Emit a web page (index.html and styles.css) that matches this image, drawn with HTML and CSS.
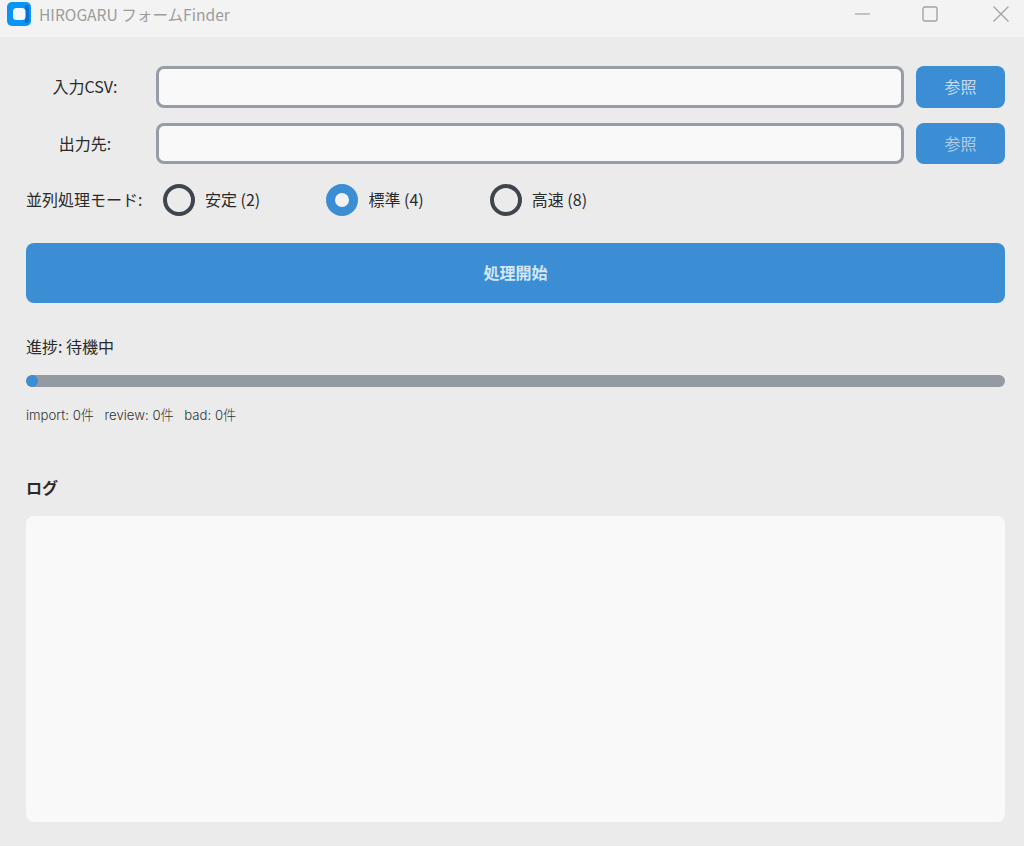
FILE: index.html
```html
<!DOCTYPE html>
<html lang="ja">
<head>
<meta charset="utf-8">
<title>HIROGARU フォームFinder</title>
<link rel="stylesheet" href="styles.css">
</head>
<body>
<header class="titlebar">
  <svg class="logo" width="24" height="24" viewBox="0 0 24 24">
    <rect width="24" height="24" rx="5" fill="#0a94f5"/>
    <path d="M18 3h1a3 3 0 0 1 3 3v12a3 3 0 0 1-3 3h-1z" fill="#0c6fd0"/>
    <rect x="6" y="6" width="12.500" height="12" rx="3.500" fill="#f4f8fc"/>
  </svg>
  <span class="app-title">HIROGARU フォームFinder</span>
  <div class="win-controls">
    <svg width="16" height="16" viewBox="0 0 16 16"><path d="M0 8h15" stroke="#a3a3a3" stroke-width="1.2" fill="none"/></svg>
    <svg class="win-max" width="16" height="16" viewBox="0 0 16 16"><rect x="1" y="1" width="14" height="14" rx="2" stroke="#a3a3a3" stroke-width="1.4" fill="none"/></svg>
    <svg class="win-close" width="16" height="16" viewBox="0 0 16 16"><path d="M.5.5l15 15M15.500.5l-15 15" stroke="#a3a3a3" stroke-width="1.3" fill="none"/></svg>
  </div>
</header>
<main class="content">
  <div class="field-row">
    <label class="field-label">入力CSV:</label>
    <div class="text-input"></div>
    <button class="browse">参照</button>
  </div>
  <div class="field-row second">
    <label class="field-label">出力先:</label>
    <div class="text-input"></div>
    <button class="browse dim">参照</button>
  </div>
  <div class="mode-row">
    <span class="mode-label">並列処理モード:</span>
    <div class="radio-item"><span class="radio"></span><span class="radio-text">安定 (2)</span></div>
    <div class="radio-item"><span class="radio on"></span><span class="radio-text">標準 (4)</span></div>
    <div class="radio-item"><span class="radio"></span><span class="radio-text">高速 (8)</span></div>
  </div>
  <button class="start">処理開始</button>
  <p class="progress-label">進捗: 待機中</p>
  <div class="progress"><div class="progress-fill"></div></div>
  <p class="counts"><span>import: 0件</span><span>review: 0件</span><span>bad: 0件</span></p>
  <h2 class="log-title">ログ</h2>
  <div class="log"></div>
</main>
</body>
</html>
```
FILE: styles.css
```css
* { box-sizing: border-box; }
html, body { margin: 0; height: 100%; }
body {
  width: 1024px;
  height: 846px;
  overflow: hidden;
  background: #ebebeb;
  color: #2a2a2a;
  font-family: "Noto Sans CJK JP", "Noto Sans", sans-serif;
  font-size: 16px;
}
.titlebar {
  height: 37px;
  background: #f3f3f3;
  display: flex;
  align-items: center;
  padding: 0 15px 9px 7px;
}
.logo { flex: none; }
.app-title {
  margin-left: 8px;
  font-size: 15.600px;
  line-height: 22px;
  color: #9c9c9c;
}
.win-controls {
  margin-left: auto;
  display: flex;
  align-items: center;
}
.win-max { margin-left: 51px; }
.win-close { margin-left: 55px; }
.content {
  padding: 29px 19px 0 26px;
  display: flex;
  flex-direction: column;
}
.field-row {
  display: grid;
  grid-template-columns: 118px 1fr 89px;
  column-gap: 12px;
  align-items: center;
  height: 42px;
}
.field-row.second { margin-top: 15px; height: 41px; }
.field-label { text-align: center; line-height: 22px; padding-bottom: 2px; }
.text-input {
  height: 100%;
  background: #f9f9f9;
  border: 3px solid #979da6;
  border-radius: 8px;
}
.browse {
  height: 100%;
  border: 0;
  border-radius: 8px;
  background: #3b8ed3;
  color: #c4dcf1;
  font: inherit;
  padding: 0 0 2px;
}
.browse.dim { color: #aecdea; }
.mode-row {
  display: flex;
  align-items: center;
  height: 32px;
  margin-top: 20px;
}
.mode-label {
  width: 137px;
  flex: none;
  white-space: nowrap;
  line-height: 22px;
  padding-bottom: 2px;
}
.radio-item {
  width: 163.400px;
  flex: none;
  display: flex;
  align-items: center;
  gap: 10px;
}
.radio-text { line-height: 22px; padding-bottom: 2px; }
.radio {
  width: 32px;
  height: 32px;
  border-radius: 50%;
  border: 4px solid #3f454c;
  flex: none;
}
.radio.on {
  border: 9px solid #3b8ed3;
  background: #f2f2f2;
}
.start {
  margin-top: 27px;
  height: 60px;
  border: 0;
  border-radius: 8px;
  background: #3b8ed3;
  color: #d5e6f5;
  font: inherit;
  font-weight: 700;
  padding: 0 0 2px;
}
.progress-label {
  margin: 32px 0 0;
  line-height: 22px;
}
.progress {
  margin-top: 18px;
  height: 12px;
  border-radius: 6px;
  background: #939aa1;
  overflow: hidden;
}
.progress-fill {
  width: 12px;
  height: 12px;
  border-radius: 6px;
  background: #3b8ed3;
}
.counts {
  margin: 18px 0 0;
  font-family: Inter, "Noto Sans CJK JP", sans-serif;
  font-size: 13.200px;
  line-height: 20px;
  font-weight: 300;
  color: #333;
  display: flex;
  gap: 10.500px;
}
.log-title {
  margin: 51px 0 0;
  font-size: 16px;
  line-height: 22px;
  font-weight: 700;
}
.log {
  margin-top: 18px;
  height: 306px;
  background: #f9f9f9;
  border-radius: 8px;
}
```
